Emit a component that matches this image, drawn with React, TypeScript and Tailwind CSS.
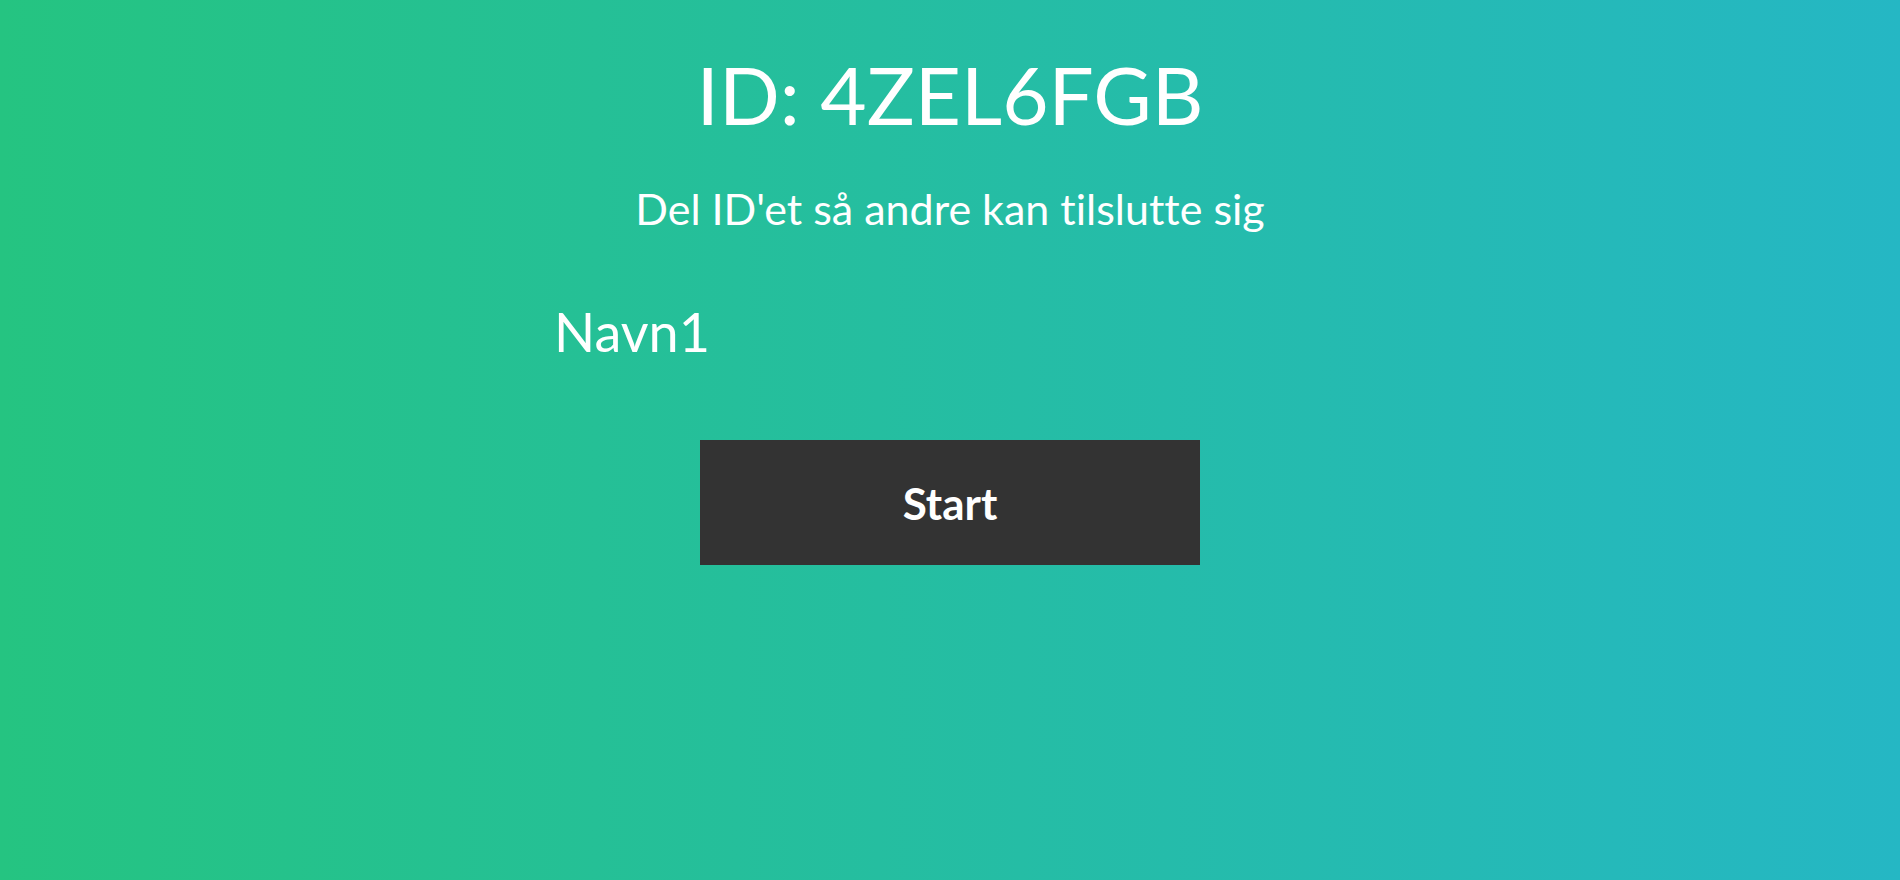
export default function App() {
  return (
    <div
      className="w-full h-[880px] bg-[linear-gradient(to_right,#25c481,#25b7c4)] text-white flex flex-col items-center [font-variant-ligatures:none]"
      style={{ fontFamily: '"Lato", "Open Sans", sans-serif' }}
    >
      <h1 className="mt-[44px] text-[80px] leading-[100px] font-normal">ID: 4ZEL6FGB</h1>
      <p className="mt-[40px] text-[43px] leading-[50px]">Del ID'et så andre kan tilslutte sig</p>
      <ul className="mt-[63px] w-[792px] pl-0">
        <li className="text-[54px] leading-[70px]">Navn1</li>
      </ul>
      <button className="mt-[73px] w-[500px] h-[125px] bg-[#333333] text-white text-[44px] font-bold">
        Start
      </button>
    </div>
  );
}
